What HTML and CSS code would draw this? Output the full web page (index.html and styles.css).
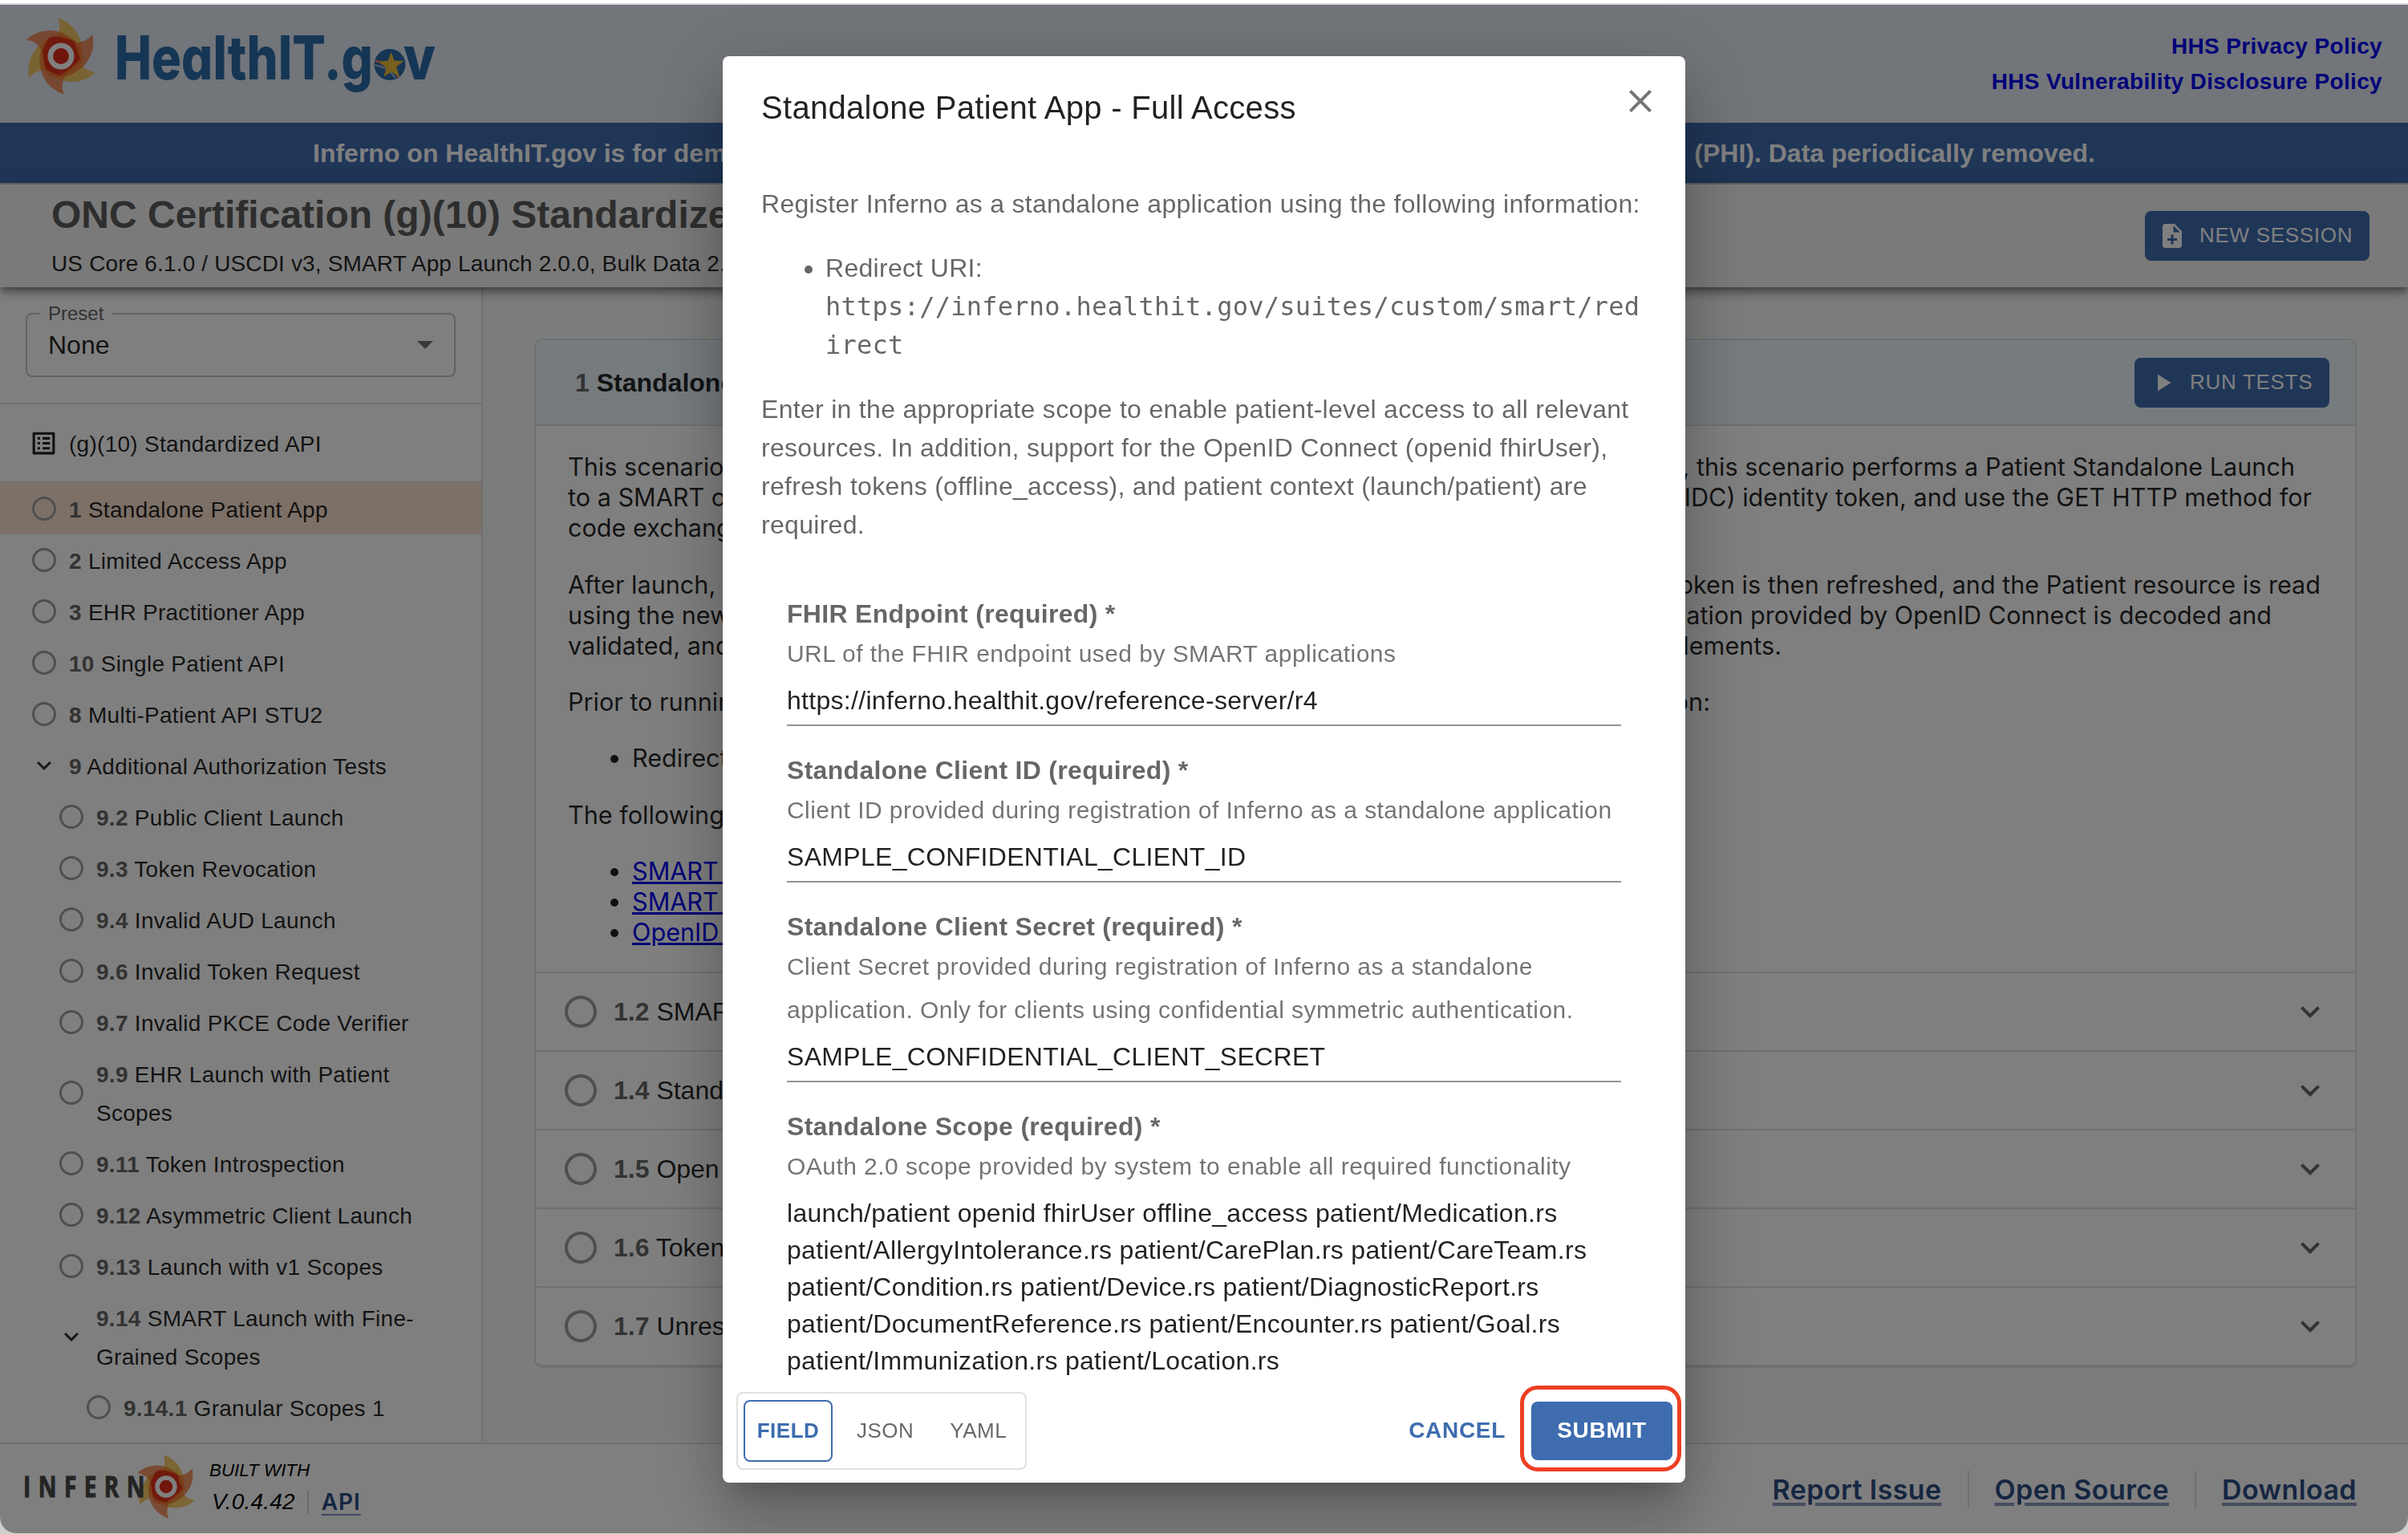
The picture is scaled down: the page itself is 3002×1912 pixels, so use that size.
FILE: index.html
```html
<!DOCTYPE html>
<html lang="en">
<head>
<meta charset="utf-8">
<title>Inferno - ONC Certification (g)(10) Standardized API</title>
<link rel="stylesheet" href="styles.css">
</head>
<body>
<svg class="defs" width="0" height="0" aria-hidden="true">
  <defs>
    <path id="blade" d="M-43-20.5C-32-31-13-36 4-28C21-20 29-6 28 6L6 22L-21 6C-21-8-29-18-43-20.5Z"/>
    <g id="sun">
      <g fill="#f2c24e" fill-opacity=".85"><use href="#blade" transform="rotate(60)"/><use href="#blade" transform="rotate(180)"/><use href="#blade" transform="rotate(300)"/></g>
      <g fill="#f06e2c" fill-opacity=".72"><use href="#blade"/><use href="#blade" transform="rotate(120)"/><use href="#blade" transform="rotate(240)"/></g>
      <path d="M-15-23Q0-27 17-18Q20-6 24 3Q20 10-1 24Q-10 22-19 16Q-22 4-23-5Q-20-15-15-23Z" fill="#e02c18" fill-opacity=".9"/>
      <circle r="13.2" fill="#e02c18" stroke="#fff" stroke-width="6.6"/>
    </g>
    <symbol id="chevron" viewBox="0 0 24 24"><path d="M7.41 8.59 12 13.17l4.59-4.58L18 10l-6 6-6-6z"/></symbol>
    <symbol id="ring" viewBox="0 0 24 24"><path d="M12 2C6.47 2 2 6.47 2 12s4.47 10 10 10 10-4.47 10-10S17.53 2 12 2zm0 18c-4.41 0-8-3.59-8-8s3.59-8 8-8 8 3.59 8 8-3.59 8-8 8z"/></symbol>
  </defs>
</svg>

<div class="app">
  <header class="site-header">
    <svg class="gov-logo" viewBox="0 0 520 104" role="img" aria-label="HealthIT.gov">
      <use href="#sun" transform="translate(48 52)"/>
      <g class="gov-word">
        <text x="115" y="81" textLength="322" lengthAdjust="spacingAndGlyphs">HealthIT.g</text>
        <text x="475" y="81" textLength="40" lengthAdjust="spacingAndGlyphs">v</text>
      </g>
      <circle cx="458" cy="62.500" r="19.500" fill="#2c6caa"/>
      <path d="M439.500 58Q458 60 469 78" fill="none" stroke="#e8806c" stroke-width="3"/>
      <path d="M439 63Q455 65 465 79" fill="none" stroke="#a9bcd8" stroke-width="2"/>
      <path d="m460 47 3.500 10.500 12 .5-9.500 7.500 4.500 13-10.500-7-9.500 6 3-11-9-7.500 11-1.500z" fill="#f0bf38"/>
    </svg>
    <nav class="policy-links"><a href="#">HHS Privacy Policy</a><a href="#">HHS Vulnerability Disclosure Policy</a></nav>
  </header>

  <div class="notice"><span>Inferno on HealthIT.gov is for demonstration purposes only. Do not use</span><span>(PHI). Data periodically removed.</span></div>

  <div class="title-bar">
    <div>
      <h1>ONC Certification (g)(10) Standardized API</h1>
      <p>US Core 6.1.0 / USCDI v3, SMART App Launch 2.0.0, Bulk Data 2.0.0</p>
    </div>
    <button class="btn new-session">
      <svg viewBox="0 0 24 24"><path d="M14 2H6c-1.100 0-1.990.9-1.990 2L4 20c0 1.100.89 2 1.990 2H18c1.100 0 2-.9 2-2V8l-6-6zm2 14h-3v3h-2v-3H8v-2h3v-3h2v3h3v2zm-3-7V3.500L18.500 9H13z"/></svg>NEW SESSION</button>
  </div>

  <div class="main">
    <aside class="sidebar">
      <div class="preset">
        <div class="select"><span class="select-label">Preset</span><span>None</span><i class="caret"></i></div>
      </div>
      <div class="suite">
        <svg viewBox="0 0 24 24"><path d="M19 5v14H5V5h14m1.100-2H3.900c-.5 0-.9.400-.9.900v16.200c0 .4.400.9.900.9h16.200c.4 0 .9-.5.900-.9V3.900c0-.5-.5-.9-.9-.9zM11 7h6v2h-6V7zm0 4h6v2h-6v-2zm0 4h6v2h-6zM7 7h2v2H7zm0 4h2v2H7zm0 4h2v2H7z"/></svg>
        <span>(g)(10) Standardized API</span>
      </div>
      <ul class="tree">
        <li class="selected"><svg><use href="#ring"/></svg><span><b>1</b> Standalone Patient App</span></li>
        <li><svg><use href="#ring"/></svg><span><b>2</b> Limited Access App</span></li>
        <li><svg><use href="#ring"/></svg><span><b>3</b> EHR Practitioner App</span></li>
        <li><svg><use href="#ring"/></svg><span><b>10</b> Single Patient API</span></li>
        <li><svg><use href="#ring"/></svg><span><b>8</b> Multi-Patient API STU2</span></li>
        <li><svg class="open"><use href="#chevron"/></svg><span><b>9</b> Additional Authorization Tests</span></li>
        <li class="l2"><svg><use href="#ring"/></svg><span><b>9.2</b> Public Client Launch</span></li>
        <li class="l2"><svg><use href="#ring"/></svg><span><b>9.3</b> Token Revocation</span></li>
        <li class="l2"><svg><use href="#ring"/></svg><span><b>9.4</b> Invalid AUD Launch</span></li>
        <li class="l2"><svg><use href="#ring"/></svg><span><b>9.6</b> Invalid Token Request</span></li>
        <li class="l2"><svg><use href="#ring"/></svg><span><b>9.7</b> Invalid PKCE Code Verifier</span></li>
        <li class="l2"><svg><use href="#ring"/></svg><span><b>9.9</b> EHR Launch with Patient<br>Scopes</span></li>
        <li class="l2"><svg><use href="#ring"/></svg><span><b>9.11</b> Token Introspection</span></li>
        <li class="l2"><svg><use href="#ring"/></svg><span><b>9.12</b> Asymmetric Client Launch</span></li>
        <li class="l2"><svg><use href="#ring"/></svg><span><b>9.13</b> Launch with v1 Scopes</span></li>
        <li class="l2"><svg class="open"><use href="#chevron"/></svg><span><b>9.14</b> SMART Launch with Fine-<br>Grained Scopes</span></li>
        <li class="l3"><svg><use href="#ring"/></svg><span><b>9.14.1</b> Granular Scopes 1</span></li>
      </ul>
    </aside>

    <main class="content">
      <section class="card">
        <div class="card-head">
          <h2><span>1</span> Standalone Patient App</h2>
          <button class="btn run"><svg viewBox="0 0 24 24"><path d="M8 5v14l11-7z"/></svg>RUN TESTS</button>
        </div>
        <div class="description">
          <div class="para">
            <div class="line end-a"><span>This scenario demonstrates the ability of a system</span><span>In particular, this scenario performs a Patient Standalone Launch</span></div>
            <div class="line end-b"><span>to a SMART on FHIR confidential client</span><span>OpenID Connect (OIDC) identity token, and use the GET HTTP method for</span></div>
            <div class="line"><span>code exchange.</span></div>
          </div>
          <div class="para">
            <div class="line end-c"><span>After launch, a simple Patient resource read</span><span>The access token is then refreshed, and the Patient resource is read</span></div>
            <div class="line end-d"><span>using the new access token</span><span>The authentication information provided by OpenID Connect is decoded and</span></div>
            <div class="line end-e"><span>validated, and simple queries</span><span>USCDI data elements.</span></div>
          </div>
          <div class="para">
            <div class="line end-f"><span>Prior to running this scenario</span><span>following information:</span></div>
          </div>
          <ul><li>Redirect URI</li></ul>
          <div class="para">The following implementation specifications</div>
          <ul><li><a href="#">SMART on FHIR</a></li><li><a href="#">SMART on FHIR</a></li><li><a href="#">OpenID Connect</a></li></ul>
        </div>
        <div class="row"><svg class="state"><use href="#ring"/></svg><span><b>1.2</b> SMART App Launch</span><svg class="more"><use href="#chevron"/></svg></div>
        <div class="row"><svg class="state"><use href="#ring"/></svg><span><b>1.4</b> Standalone Launch</span><svg class="more"><use href="#chevron"/></svg></div>
        <div class="row"><svg class="state"><use href="#ring"/></svg><span><b>1.5</b> Open ID Connect</span><svg class="more"><use href="#chevron"/></svg></div>
        <div class="row"><svg class="state"><use href="#ring"/></svg><span><b>1.6</b> Token Refresh</span><svg class="more"><use href="#chevron"/></svg></div>
        <div class="row"><svg class="state"><use href="#ring"/></svg><span><b>1.7</b> Unrestricted Access</span><svg class="more"><use href="#chevron"/></svg></div>
      </section>
    </main>
  </div>

  <footer class="site-footer">
    <svg class="inferno-logo" viewBox="0 0 216 84" role="img" aria-label="Inferno">
      <use href="#sun" transform="translate(176 42) scale(.83)"/>
      <text class="inferno-word" transform="translate(-2 55) scale(.8 1)">INFERN</text>
    </svg>
    <div class="built"><span class="built-with">BUILT WITH</span><span class="version">V.0.4.42<a href="#">API</a></span></div>
    <nav class="footer-links"><a href="#">Report Issue</a><a href="#">Open Source</a><a href="#">Download</a></nav>
  </footer>
</div>

<div class="backdrop">
  <div class="dialog" role="dialog">
    <div class="dialog-title"><h2>Standalone Patient App - Full Access</h2>
      <svg class="close" viewBox="0 0 24 24"><path d="M19 6.410 17.590 5 12 10.590 6.410 5 5 6.410 10.590 12 5 17.590 6.410 19 12 13.410 17.590 19 19 17.590 13.410 12z"/></svg>
    </div>
    <div class="dialog-body">
      <p>Register Inferno as a standalone application using the following information:</p>
      <ul><li>Redirect URI:<br><code>https://inferno.healthit.gov/suites/custom/smart/redirect</code></li></ul>
      <p>Enter in the appropriate scope to enable patient-level access to all relevant<br>resources. In addition, support for the OpenID Connect (openid fhirUser),<br>refresh tokens (offline_access), and patient context (launch/patient) are<br>required.</p>
      <div class="fields">
        <div class="field"><label>FHIR Endpoint (required) *</label><small>URL of the FHIR endpoint used by SMART applications</small><div class="value">https://inferno.healthit.gov/reference-server/r4</div></div>
        <div class="field"><label>Standalone Client ID (required) *</label><small>Client ID provided during registration of Inferno as a standalone application</small><div class="value">SAMPLE_CONFIDENTIAL_CLIENT_ID</div></div>
        <div class="field"><label>Standalone Client Secret (required) *</label><small>Client Secret provided during registration of Inferno as a standalone<br>application. Only for clients using confidential symmetric authentication.</small><div class="value">SAMPLE_CONFIDENTIAL_CLIENT_SECRET</div></div>
        <div class="field"><label>Standalone Scope (required) *</label><small>OAuth 2.0 scope provided by system to enable all required functionality</small><div class="value">launch/patient openid fhirUser offline_access patient/Medication.rs<br>patient/AllergyIntolerance.rs patient/CarePlan.rs patient/CareTeam.rs<br>patient/Condition.rs patient/Device.rs patient/DiagnosticReport.rs<br>patient/DocumentReference.rs patient/Encounter.rs patient/Goal.rs<br>patient/Immunization.rs patient/Location.rs</div></div>
      </div>
    </div>
    <div class="dialog-actions">
      <div class="toggle"><button class="on">FIELD</button><button>JSON</button><button>YAML</button></div>
      <button class="cancel">CANCEL</button>
      <div class="submit-wrap"><button class="btn submit">SUBMIT</button><i class="highlight"></i></div>
    </div>
  </div>
</div>
</body>
</html>
```
FILE: styles.css
```css
* { box-sizing: border-box; }
html, body { margin: 0; height: 100%; overflow: hidden; }
body {
  background: #cfcfcf;
  font-family: "Liberation Sans", Arial, sans-serif;
  font-size: 32px;
  color: rgba(0, 0, 0, .87);
}
h1, h2, p, ul { margin: 0; padding: 0; }
button { font-family: inherit; border: 0; background: none; padding: 0; white-space: nowrap; }
svg { display: block; fill: currentColor; flex: none; }
.defs { position: absolute; }

.app {
  display: flex;
  flex-direction: column;
  height: 1911px;
  border-radius: 0 0 20px 20px;
  overflow: hidden;
  border-top: 4px solid #fff;
  background: #fff;
}
.site-header {
  height: 149px;
  flex: none;
  display: flex;
  justify-content: space-between;
  align-items: flex-start;
  padding: 14px 32px 0 28px;
  background: #e4eaf4;
  border-top: 2px solid #d8d8d8;
}
.gov-logo { width: 520px; height: 104px; margin-top: -2px; }
.gov-word { font: 800 75px Inter, sans-serif; font-feature-settings: "cv11" 1; fill: #2c6caa; }
.policy-links { display: flex; flex-direction: column; align-items: flex-end; padding-top: 16px; }
.policy-links a { font-size: 28px; font-weight: 700; line-height: 44px; letter-spacing: .35px; color: #0000f0; text-decoration: none; }

.notice {
  height: 77px;
  flex: none;
  display: flex;
  justify-content: space-between;
  align-items: center;
  padding: 2px 390px 0;
  background: #3e6cae;
  border-bottom: 2px solid #d0d0d0;
  color: #fff;
  font-weight: 700;
}
.title-bar {
  position: relative;
  z-index: 1;
  height: 128px;
  flex: none;
  display: flex;
  justify-content: space-between;
  align-items: center;
  padding: 0 48px 0 64px;
  background: #f4f4f4;
  box-shadow: 0 4px 8px -2px rgba(0, 0, 0, .35), 0 8px 10px rgba(0, 0, 0, .2), 0 2px 20px rgba(0, 0, 0, .16);
}
.title-bar h1 { font-size: 48px; line-height: 56px; color: #5c5c5c; white-space: nowrap; }
.title-bar p { margin-top: 9px; font-size: 28px; line-height: 48px; letter-spacing: .15px; color: rgba(0, 0, 0, .87); }
.title-bar > div { padding-top: 5px; }

.btn {
  display: flex;
  align-items: center;
  border-radius: 8px;
  background: #3e6cae;
  color: #fff;
  font-size: 26px;
  letter-spacing: .7px;
}
.new-session { width: 280px; height: 62px; padding-left: 16px; margin-top: -1px; }
.new-session svg { width: 36px; height: 36px; margin-right: 16px; }
.run { width: 243px; height: 62px; padding-left: 17px; }
.run svg { width: 36px; height: 36px; margin-right: 16px; }

.main { flex: 1; display: flex; min-height: 0; }
.sidebar { width: 602px; flex: none; border-right: 2px solid #e0e0e0; background: #fff; overflow: hidden; }
.preset { height: 146px; padding: 32px; border-bottom: 2px solid #e0e0e0; }
.select {
  position: relative;
  display: flex;
  align-items: center;
  justify-content: space-between;
  height: 80px;
  padding: 0 26px;
  border: 2px solid #c4c4c4;
  border-radius: 8px;
}
.select-label { position: absolute; top: -15px; left: 15px; padding: 0 11px; background: #fff; font-size: 24px; line-height: 28px; color: #666; }
.caret { border: 10px solid transparent; border-top-color: #757575; border-bottom: 0; }
.suite { height: 98px; display: flex; align-items: center; padding-left: 36px; border-bottom: 2px solid #e0e0e0; font-size: 28px; letter-spacing: .28px; }
.suite svg { width: 37px; height: 37px; margin-right: 13px; }
.suite span { padding-top: 3px; }
.tree { list-style: none; font-size: 28px; line-height: 48px; letter-spacing: .28px; }
.tree li { display: flex; align-items: center; padding: 8px 0 8px 37px; }
.tree .l2 { padding-left: 71px; }
.tree .l3 { padding-left: 105px; }
.tree .selected { background: #f9e1cf; }
.tree span { padding-top: 2px; margin-bottom: -2px; }
.tree svg { width: 36px; height: 36px; margin-right: 13px; color: #9e9e9e; }
.tree svg.open { color: #333; }
.tree b, .row b, .card-head h2 span { color: #666; }

.content { flex: 1; min-width: 0; padding: 64px; background: #f5faf7; }
.card { border: 2px solid #e0e0e0; border-bottom-width: 4px; border-radius: 10px; background: #fff; overflow: hidden; }
.card-head {
  height: 107px;
  display: flex;
  align-items: center;
  justify-content: space-between;
  padding: 0 32px 0 49px;
  background: #ecf6fc;
  border-bottom: 2px solid #e0e0e0;
}
.card-head h2 { font-size: 32px; padding-top: 2px; }
.description {
  padding: 32px 40px 30px;
  font: 30.6px/38.2px Inter, sans-serif;
  border-bottom: 2px solid #e0e0e0;
}
.para + .para { margin-top: 32px; }
.line { display: flex; justify-content: space-between; white-space: nowrap; }
.end-a { padding-right: 35px; }
.end-b { padding-right: 14px; }
.end-c { padding-right: 3px; }
.end-d { padding-right: 64px; }
.end-e { padding-right: 675px; }
.end-f { padding-right: 764px; }
.description ul { margin: 32px 0; padding-left: 80px; }
.description ul:last-child { margin-bottom: 0; }
.description a { color: #0000ee; }
.row { height: 98px; display: flex; align-items: center; padding: 0 32px; border-bottom: 2px solid #e0e0e0; }
.row:last-child { border-bottom: 0; height: 96px; }
.row .state { width: 48px; height: 48px; margin-right: 17px; color: #9e9e9e; }
.row .more { width: 48px; height: 48px; margin-left: auto; color: #666; }

.site-footer {
  height: 113px;
  flex: none;
  display: flex;
  align-items: center;
  padding: 0 64px 0 31px;
  border-top: 2px solid #e0e0e0;
  background: #fff;
}
.inferno-logo { width: 216px; height: 84px; margin-right: 14px; margin-top: -6px; overflow: visible; }
.inferno-word { font: 700 35px "Open Sans", "Noto Sans", sans-serif; letter-spacing: 11.8px; fill: #484848; stroke: #484848; stroke-width: 1; }
.built { display: flex; flex-direction: column; font-style: italic; color: #000; margin-top: -3px; }
.built-with { font-size: 22.4px; line-height: 36px; }
.version { display: flex; align-items: center; font-size: 28px; line-height: 42px; letter-spacing: .2px; padding-left: 3px; }
.version a { margin-left: 15px; padding-left: 16px; border-left: 2px solid #d5d5d5; font: 600 28px/28px Inter, sans-serif; letter-spacing: .9px; color: #2c4c82; text-underline-offset: 5px; text-decoration-color: #8090c0; text-decoration-thickness: 2px; }
.footer-links { display: flex; margin-left: auto; padding-top: 2px; }
.footer-links a {
  font: 600 34px/48px Inter, sans-serif;
  letter-spacing: .4px;
  color: #2c4c82;
  text-decoration-color: #8a98c0;
  text-decoration-thickness: 4px;
  text-underline-offset: 4px;
}
.footer-links a + a { margin-left: 32px; padding-left: 32px; border-left: 2px solid #e0e0e0; }

.backdrop {
  position: fixed;
  z-index: 10;
  inset: 6px 0 1px;
  display: flex;
  align-items: center;
  justify-content: center;
  background: rgba(0, 0, 0, .5);
  border-radius: 0 0 20px 20px;
  overflow: hidden;
}
.dialog {
  width: 1200px;
  height: 1778px;
  display: flex;
  flex-direction: column;
  background: #fff;
  border-radius: 8px;
  box-shadow: 0 22px 30px -14px rgba(0, 0, 0, .2), 0 48px 76px 6px rgba(0, 0, 0, .14), 0 18px 92px 16px rgba(0, 0, 0, .12);
}
.dialog-title { height: 96px; flex: none; display: flex; justify-content: space-between; padding: 32px 32px 0 48px; }
.dialog-title h2 { font-size: 40px; font-weight: 400; line-height: 64px; letter-spacing: .3px; }
.close { width: 48px; height: 48px; color: #757575; }
.dialog-body { flex: 1; min-height: 0; overflow: hidden; padding: 64px 48px 0; line-height: 48px; letter-spacing: .3px; color: rgba(0, 0, 0, .6); }
.dialog-body ul { margin: 32px 0; padding-left: 80px; }
.dialog-body code { font-family: "DejaVu Sans Mono", monospace; font-size: 32px; line-height: 40px; word-break: break-all; letter-spacing: .26px; }
.dialog-body li { height: 144px; }
.fields { padding: 64px 32px 0; }
.field { display: flex; flex-direction: column; margin-bottom: 32px; }
.field label { font-weight: 700; line-height: 46px; }
.field small { font-size: 30px; line-height: 54px; letter-spacing: .45px; white-space: nowrap; color: rgba(0, 0, 0, .55); }
.value { padding: 8px 0 7px; line-height: 46px; border-bottom: 2px solid #949494; color: rgba(0, 0, 0, .87); white-space: nowrap; }

.dialog-actions { height: 129px; flex: none; display: flex; align-items: center; padding: 0 16px 0 17px; }
.toggle { display: flex; align-items: center; width: 362px; height: 97px; padding-left: 7px; border: 2px solid #e0e0e0; border-radius: 8px; }
.toggle button { font-size: 26px; letter-spacing: .5px; height: 77px; color: rgba(0, 0, 0, .6); margin-left: 30px; }
.toggle button + button + button { margin-left: 45px; }
.toggle .on { width: 111px; margin-left: 0; border: 2px solid #3e6cae; border-radius: 8px; color: #3e6cae; font-weight: 700; }
.cancel { margin-left: auto; margin-right: 32px; font-size: 28px; font-weight: 700; letter-spacing: .7px; color: #3e6cae; }
.submit-wrap { position: relative; }
.submit { width: 176px; height: 73px; justify-content: center; font-size: 28px; font-weight: 700; }
.highlight { position: absolute; inset: -20px -11px -14px -14px; border: 5px solid #ee3f24; border-radius: 22px; }
```
